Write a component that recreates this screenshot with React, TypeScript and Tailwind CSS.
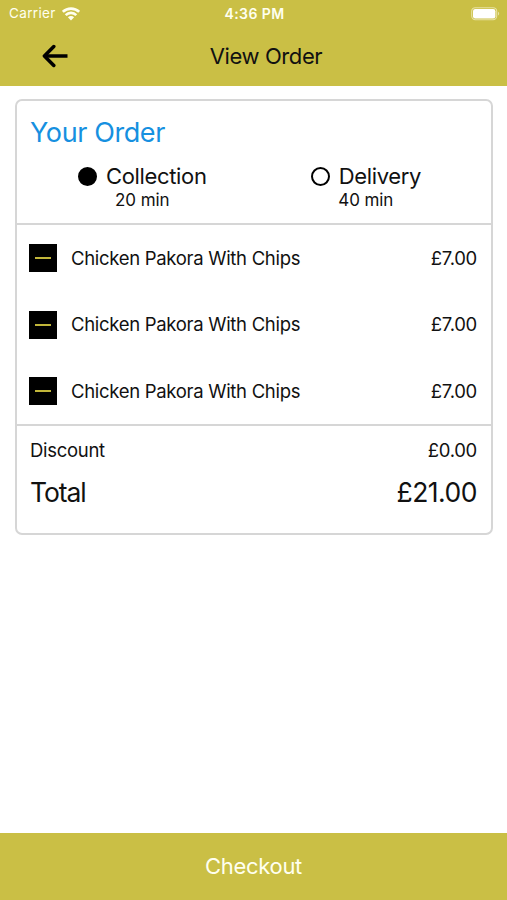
import React, { useState } from 'react';

type OrderType = 'collection' | 'delivery';

const initialItems = [
  { id: 1, name: 'Chicken Pakora With Chips', price: 7 },
  { id: 2, name: 'Chicken Pakora With Chips', price: 7 },
  { id: 3, name: 'Chicken Pakora With Chips', price: 7 }
];

const formatPrice = (value: number): string => `£${value.toFixed(2)}`;

const StatusBar = () => {
  return <div className="grid grid-cols-3 items-center h-[27px] pl-[9px] pr-[7px] text-[#fffff0]">
      <div className="flex items-center gap-[6px] pt-px">
        <span className="text-[13.5px] leading-none tracking-[0.35px]">Carrier</span>
        <svg width="18" height="14" viewBox="0 0 18 14" fill="none" stroke="currentColor" strokeWidth="2.7">
          <path d="M0.8 4.9C5.3 0.4 12.7 0.4 17.2 4.9" />
          <path d="M3.7 8.1C6.7 5.2 11.3 5.2 14.3 8.1" />
          <path d="M9 13.4L5.9 10.3C7.7 8.7 10.3 8.7 12.1 10.3Z" fill="currentColor" stroke="none" />
        </svg>
      </div>
      <span className="text-center text-[14px] leading-none font-semibold tracking-[0.4px] pt-px">4:36 PM</span>
      <svg className="justify-self-end" width="29" height="14" viewBox="0 0 29 14">
        <rect x="0.7" y="0.7" width="25" height="12" rx="3.6" fill="none" stroke="#fffff0" strokeOpacity="0.55" strokeWidth="1.1" />
        <rect x="2" y="2" width="22.4" height="9.4" rx="2.2" fill="#fff" />
        <path d="M27 4.8C28.6 5.4 28.6 8 27 8.6Z" fill="#fffff0" fillOpacity="0.55" />
      </svg>
    </div>;
};

const OrderOption = ({ label, time, selected, onSelect }: {
  label: string;
  time: string;
  selected: boolean;
  onSelect: () => void;
}) => {
  return <button type="button" onClick={onSelect} className="flex flex-col items-center">
      <span className="flex items-center gap-[9px] h-[28px]">
        <span className={`w-[19px] h-[19px] rounded-full border-2 border-black ${selected ? 'bg-black' : 'bg-white'}`} />
        <span className="text-[22px] leading-none tracking-[-0.35px]">{label}</span>
      </span>
      <span className="text-[17px] leading-[20px] tracking-[-0.1px]">{time}</span>
    </button>;
};

const App = () => {
  const [orderType, setOrderType] = useState<OrderType>('collection');
  const [items, setItems] = useState(initialItems);
  const total = items.reduce((sum, item) => sum + item.price, 0);

  const removeItem = (id: number) => {
    setItems(items.filter(item => item.id !== id));
  };

  return <div className="flex flex-col h-screen bg-white text-[#111] font-['Inter',sans-serif]">
      <header className="h-[86px] flex-shrink-0 bg-[#cabf45]">
        <StatusBar />
        <div className="grid grid-cols-[92px_1fr_92px] items-center h-[58px]">
          <button type="button" aria-label="Back" className="pl-[42px]">
            <svg width="26" height="24" viewBox="0 0 26 24" fill="none" stroke="#000" strokeWidth="3.5" strokeLinecap="round" strokeLinejoin="round">
              <path d="M25.5 12H2.5" strokeLinecap="butt" />
              <path d="M11.8 2.5L2.4 12L11.8 21.5" />
            </svg>
          </button>
          <h1 className="text-center text-[22px] leading-none tracking-[-0.4px] pl-[25px]">View Order</h1>
        </div>
      </header>
      <main className="flex-1 pl-[15px] pr-[14px] pt-[13px]">
        <div className="h-[436px] border-2 border-[#d6d6d6] rounded-[7px]">
          {/* Order type */}
          <section className="h-[124px] border-b-2 border-[#d6d6d6]">
            <h2 className="pl-[13px] pt-[14px] text-[27px] leading-[36px] tracking-[-0.4px] text-[#1690e0]">Your Order</h2>
            <div className="flex justify-between pt-[11px] pl-[61px] pr-[70px]">
              <OrderOption label="Collection" time="20 min" selected={orderType === 'collection'} onSelect={() => setOrderType('collection')} />
              <OrderOption label="Delivery" time="40 min" selected={orderType === 'delivery'} onSelect={() => setOrderType('delivery')} />
            </div>
          </section>
          {/* Items */}
          <ul className="h-[201px] border-b-2 border-[#d6d6d6]">
            {items.map(item => <li key={item.id} className="flex items-center h-[66.5px] pl-[12px] pr-[14px] text-[18.5px] tracking-[-0.3px]">
                <button type="button" aria-label="Remove item" onClick={() => removeItem(item.id)} className="flex items-center justify-center w-[28px] h-[28px] mr-[14px] bg-black">
                  <span className="w-4 h-[2px] bg-[#c1b63a]" />
                </button>
                <span className="flex-1 pt-px">{item.name}</span>
                <span className="pt-px">{formatPrice(item.price)}</span>
              </li>)}
          </ul>
          {/* Totals */}
          <div className="pl-[13px] pr-[14px] pt-[10px]">
            <div className="flex justify-between text-[18.5px] leading-[28px] tracking-[-0.3px]">
              <span>Discount</span>
              <span>{formatPrice(0)}</span>
            </div>
            <div className="flex justify-between pt-[10px] text-[26.5px] leading-[36px]">
              <span className="tracking-[-1.1px]">Total</span>
              <span className="tracking-[-0.5px]">{formatPrice(total)}</span>
            </div>
          </div>
        </div>
      </main>
      <button type="button" className="h-[67px] flex-shrink-0 bg-[#cabf45] text-[22px] tracking-[-0.3px] text-[#fffff0]">Checkout</button>
    </div>;
};

export default App;
